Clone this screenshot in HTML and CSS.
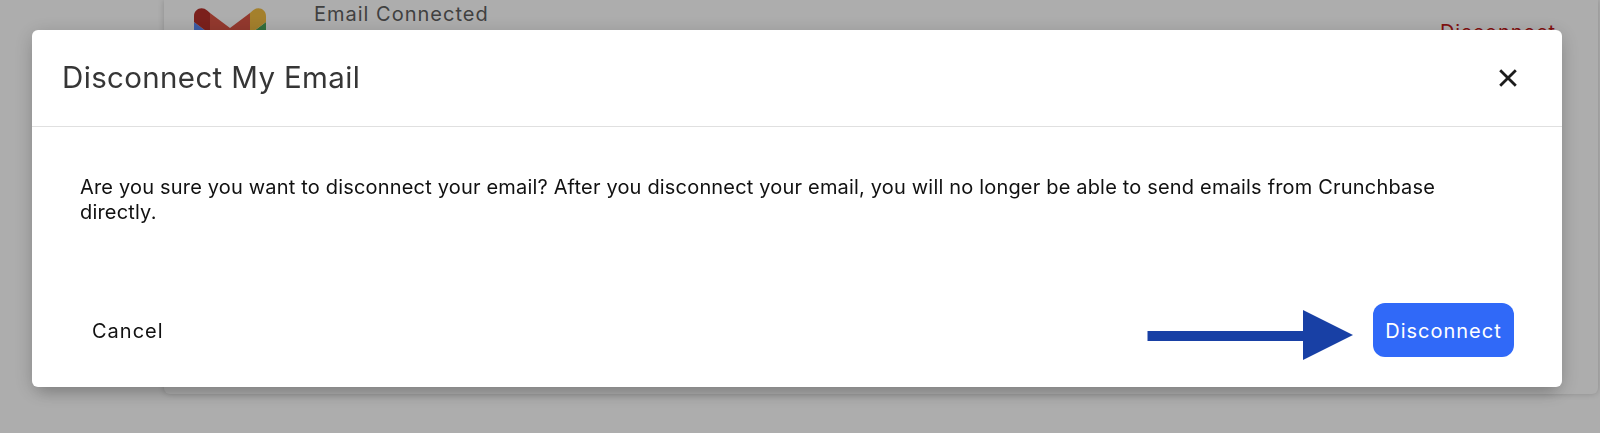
FILE: index.html
```
<!DOCTYPE html>
<html lang="en">
<head>
  <meta charset="UTF-8">
  <title>Disconnect My Email</title>
  <link rel="stylesheet" href="styles.css">
</head>
<body>
  <div class="card">
    <svg class="gmail-icon" width="72" height="54" viewBox="0 0 72 54">
      <path d="M0 14 L16 26 V54 H5 Q0 54 0 49 Z" fill="#5a88f5"/>
      <path d="M72 14 L56 26 V54 H67 Q72 54 72 49 Z" fill="#4aa358"/>
      <path d="M16 5 L36 20 L56 5 V26 L36 41 L16 26 Z" fill="#d95444"/>
      <path d="M0 14 V8 C0 1 8 -2.500 13.500 2.800 L16 5 V26 Z" fill="#b5302a"/>
      <path d="M72 14 V8 C72 1 64 -2.500 58.500 2.800 L56 5 V26 Z" fill="#f2bd42"/>
    </svg>
    <div class="card-status">Email Connected</div>
    <div class="card-link">Disconnect</div>
  </div>

  <div class="overlay">
    <div class="modal">
      <div class="modal-header">
        <h2 class="modal-title">Disconnect My Email</h2>
        <button class="close-button" aria-label="Close">
          <svg width="18" height="18" viewBox="0 0 18 18">
            <path d="M1.200 1.200 L16.800 16.800 M16.800 1.200 L1.200 16.800" stroke="#1c1c1c" stroke-width="2.800" fill="none"/>
          </svg>
        </button>
      </div>

      <p class="modal-text">Are you sure you want to disconnect your email? After you disconnect your email, you will no longer be able to send emails from Crunchbase directly.</p>

      <div class="modal-footer">
        <button class="button button-secondary">Cancel</button>
        <svg class="arrow" width="206" height="50" viewBox="0 0 206 50">
          <path d="M0.500 21 H156 V0 L206 25 L156 50 V31 H0.500 Z" fill="#1840a5"/>
        </svg>
        <button class="button button-primary">Disconnect</button>
      </div>
    </div>
  </div>
</body>
</html>
```

FILE: styles.css
```
* {
  box-sizing: border-box;
}

body {
  margin: 0;
  height: 433px;
  overflow: hidden;
  background-color: #fff;
  font-family: Inter, "Liberation Sans", Arial, sans-serif;
}

.card {
  display: flex;
  align-items: flex-start;
  height: 394px;
  margin: 0 2px 0 164px;
  padding: 8px 42px 0 30px;
  border-radius: 0 0 6px 6px;
  box-shadow: 0 0 6px rgba(0, 0, 0, 0.2);
}

.card-status {
  margin: -6px auto 0 48px;
  font-size: 20px;
  line-height: 24px;
  letter-spacing: 1px;
  color: #5f5f5f;
}

.card-link {
  margin-top: 12px;
  font-size: 20px;
  line-height: 24px;
  letter-spacing: 0.95px;
  color: #c01818;
}

/* covers the page behind the dialog */
.overlay {
  position: fixed;
  inset: 0;
  padding: 30px 38px 0 32px;
  background-color: rgba(0, 0, 0, 0.32);
}

.modal {
  display: flex;
  flex-direction: column;
  height: 357px;
  border-radius: 6px;
  background-color: #fff;
  box-shadow: 0 11px 15px -7px rgba(0, 0, 0, 0.15), 0 4px 20px rgba(0, 0, 0, 0.2);
}

.modal-header {
  display: flex;
  align-items: center;
  justify-content: space-between;
  height: 97px;
  padding: 0 45px 0 30px;
  border-bottom: 1px solid #e0e0e0;
}

.modal-title {
  margin: 0 0 2px;
  font-size: 29.5px;
  font-weight: 400;
  line-height: 36px;
  letter-spacing: 0.35px;
  color: #363636;
}

.close-button {
  display: flex;
  padding: 0;
  border: none;
  background: none;
  cursor: pointer;
}

.modal-text {
  margin: 0;
  padding: 48px 47px 0 48px;
  font-size: 20px;
  line-height: 25px;
  letter-spacing: 0.18px;
  color: #111;
}

.modal-footer {
  display: flex;
  align-items: center;
  margin-top: auto;
  padding: 0 48px 30px 48px;
}

.button {
  height: 54px;
  padding: 2px 12px 0;
  border: none;
  border-radius: 12px;
  font-family: inherit;
  font-size: 20px;
  letter-spacing: 1px;
  cursor: pointer;
}

.button-secondary {
  margin-right: auto;
  background: none;
  color: #111;
}

.button-primary {
  width: 141px;
  margin-left: 20px;
  background-color: #3069f8;
  color: #fff;
}

/* sits a little lower than the buttons */
.arrow {
  margin-bottom: -10px;
}
```
